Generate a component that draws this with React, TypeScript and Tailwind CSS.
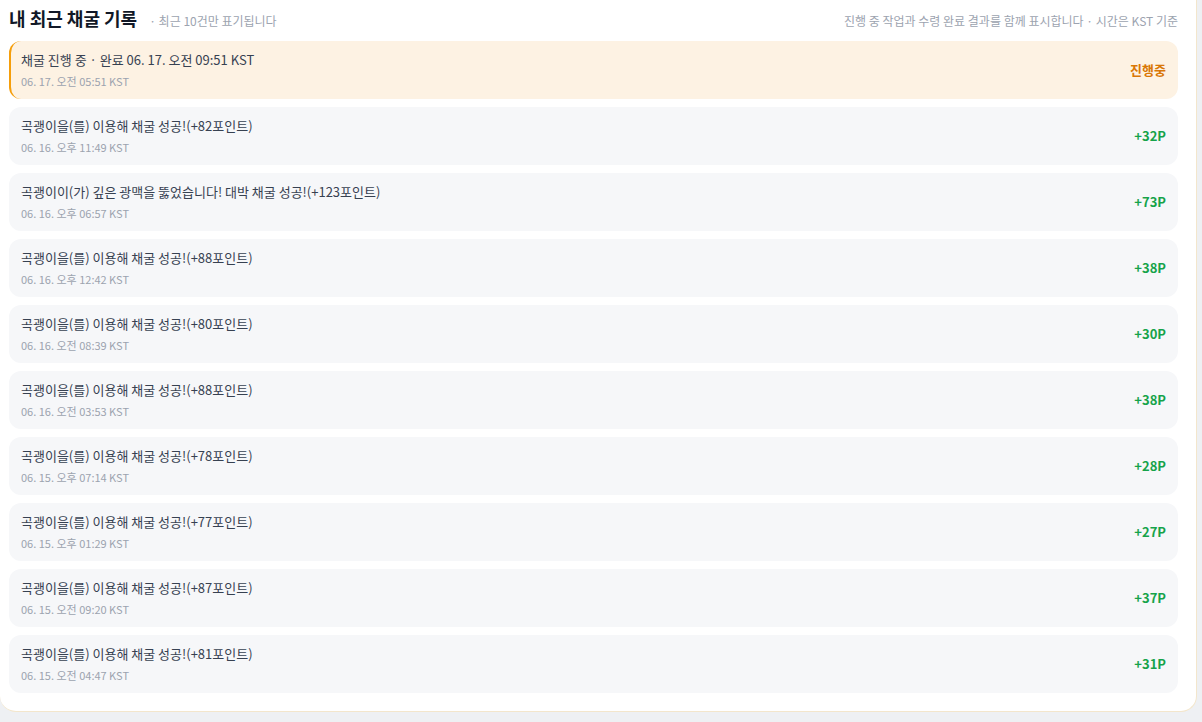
const rows = [
  { title: '곡괭이을(를) 이용해 채굴 성공!(+82포인트)', time: '06. 16. 오후 11:49 KST', points: '+32P' },
  { title: '곡괭이이(가) 깊은 광맥을 뚫었습니다! 대박 채굴 성공!(+123포인트)', time: '06. 16. 오후 06:57 KST', points: '+73P' },
  { title: '곡괭이을(를) 이용해 채굴 성공!(+88포인트)', time: '06. 16. 오후 12:42 KST', points: '+38P' },
  { title: '곡괭이을(를) 이용해 채굴 성공!(+80포인트)', time: '06. 16. 오전 08:39 KST', points: '+30P' },
  { title: '곡괭이을(를) 이용해 채굴 성공!(+88포인트)', time: '06. 16. 오전 03:53 KST', points: '+38P' },
  { title: '곡괭이을(를) 이용해 채굴 성공!(+78포인트)', time: '06. 15. 오후 07:14 KST', points: '+28P' },
  { title: '곡괭이을(를) 이용해 채굴 성공!(+77포인트)', time: '06. 15. 오후 01:29 KST', points: '+27P' },
  { title: '곡괭이을(를) 이용해 채굴 성공!(+87포인트)', time: '06. 15. 오전 09:20 KST', points: '+37P' },
  { title: '곡괭이을(를) 이용해 채굴 성공!(+81포인트)', time: '06. 15. 오전 04:47 KST', points: '+31P' },
];

function HistoryRow({ title, time, points }: { title: string; time: string; points: string }) {
  return (
    <div className="h-[58px] rounded-[12px] bg-[#f6f7f9] px-[12px] flex items-center justify-between">
      <div className="flex flex-col gap-[4px]">
        <p className="text-[13px] leading-[18px] text-[#374151]">{title}</p>
        <p className="text-[11px] leading-[16px] text-[#9ca3af]">{time}</p>
      </div>
      <span className="text-[13px] font-bold text-[#16a34a]">{points}</span>
    </div>
  );
}

export default function App() {
  return (
    <div
      className="min-h-[722px] bg-[#eef0f3]"
      style={{ fontFamily: '"Noto Sans CJK KR", "Noto Sans", sans-serif' }}
    >
      <div className="w-[1197px] bg-white border-r border-b border-[#f3e6cc] rounded-br-[16px] rounded-bl-[16px] pl-[9px] pr-[18px] pb-[18px]">
        <div className="flex items-baseline justify-between pt-[4px] pb-[9px]">
          <div className="flex items-baseline gap-[12px]">
            <h2 className="text-[18px] leading-[28px] font-bold text-[#111827]">내 최근 채굴 기록</h2>
            <span className="text-[12px] text-[#9ca3af]">· 최근 10건만 표기됩니다</span>
          </div>
          <span className="text-[12px] text-[#9ca3af]">
            진행 중 작업과 수령 완료 결과를 함께 표시합니다 · 시간은 KST 기준
          </span>
        </div>

        <div className="flex flex-col gap-[8px]">
          <div className="h-[58px] rounded-[12px] bg-[#fdf2e3] border-l-2 border-[#f59e0b] pl-[10px] pr-[12px] flex items-center justify-between">
            <div className="flex flex-col gap-[4px]">
              <p className="text-[13px] leading-[18px] text-[#374151]">채굴 진행 중 · 완료 06. 17. 오전 09:51 KST</p>
              <p className="text-[11px] leading-[16px] text-[#9ca3af]">06. 17. 오전 05:51 KST</p>
            </div>
            <span className="text-[13px] font-bold text-[#d97706]">진행중</span>
          </div>
          {rows.map((r, i) => (
            <HistoryRow key={i} {...r} />
          ))}
        </div>
      </div>
    </div>
  );
}
